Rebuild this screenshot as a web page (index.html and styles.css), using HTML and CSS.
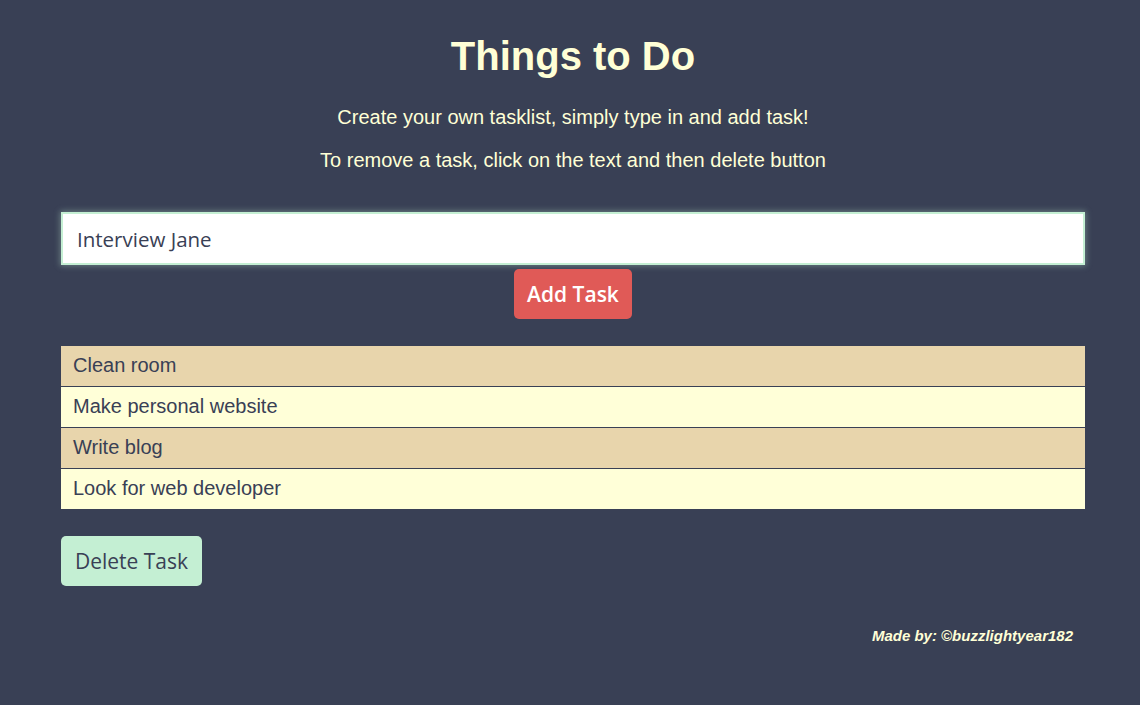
FILE: index.html
```html
<!DOCTYPE html>
<html>
<head>
<meta charset="utf-8">
<link rel="stylesheet" href="styles.css">
</head>
<body>
<div class="page">
  <h1 class="title">Things to Do</h1>
  <p class="intro">Create your own tasklist, simply type in and add task!</p>
  <p class="intro">To remove a task, click on the text and then delete button</p>
  <div class="entry">
    <input class="task-input" type="text" value="Interview Jane">
    <button class="add-btn">Add Task</button>
  </div>
  <ul class="tasks">
    <li class="task odd">Clean room</li>
    <li class="task even">Make personal website</li>
    <li class="task odd">Write blog</li>
    <li class="task even">Look for web developer</li>
  </ul>
  <button class="delete-btn">Delete Task</button>
  <p class="credit">Made by: ©buzzlightyear182</p>
</div>
</body>
</html>
```
FILE: styles.css
```css
html, body {
  margin: 0;
  padding: 0;
  background: #394055;
}
body {
  font-family: "Liberation Sans", Arial, sans-serif;
  color: #ffffd6;
}
.page {
  width: 1024px;
  padding: 0 0 0 61px;
  display: flex;
  flex-direction: column;
}
.title {
  margin: 33px 0 0;
  font-size: 40px;
  line-height: 46px;
  font-weight: bold;
  text-align: center;
}
.intro {
  margin: 0;
  font-size: 20px;
  line-height: 22px;
  text-align: center;
}
.title + .intro { margin-top: 27px; }
.intro + .intro { margin-top: 21px; }
.entry {
  margin-top: 41px;
  display: flex;
  flex-direction: column;
  align-items: center;
}
.task-input {
  box-sizing: border-box;
  width: 1024px;
  height: 53px;
  margin: 0;
  border: 2px solid #c4efd3;
  box-shadow: 0 0 6px 1px rgba(196, 239, 211, 0.35);
  background: #fff;
  padding: 0 14px;
  font-family: "Open Sans", "DejaVu Sans", sans-serif;
  font-size: 20.5px;
  color: #394055;
  outline: none;
}
.add-btn {
  margin-top: 4px;
  width: 118px;
  height: 50px;
  border: none;
  border-radius: 5px;
  background: #e05a57;
  color: #fff;
  font-family: "Open Sans", "DejaVu Sans", sans-serif;
  font-weight: 600;
  font-size: 21px;
  padding: 0;
}
.tasks {
  list-style: none;
  margin: 27px 0 0;
  padding: 0;
}
.task {
  height: 40px;
  line-height: 38px;
  padding-left: 12px;
  font-size: 20px;
  color: #394055;
  border-top: 1px solid #394055;
}
.task:first-child { border-top: none; }
.task.odd { background: #e8d5ac; }
.task.even { background: #ffffd8; }
.delete-btn {
  align-self: flex-start;
  margin-top: 27px;
  width: 141px;
  height: 50px;
  border: none;
  border-radius: 5px;
  background: #c4efd3;
  color: #394055;
  font-family: "Open Sans", "DejaVu Sans", sans-serif;
  font-size: 21px;
  padding: 0;
}
.credit {
  margin: 41px 12px 0 0;
  text-align: right;
  font-style: italic;
  font-weight: bold;
  font-size: 15px;
}
```
